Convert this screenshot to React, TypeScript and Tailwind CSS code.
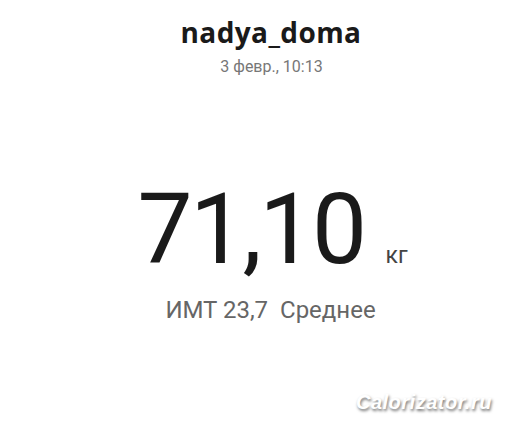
import React from "react";

export default function App() {
  return (
    <div className="relative w-[521px] h-[426px] bg-white overflow-hidden" style={{ fontFamily: "Roboto, 'Noto Sans', sans-serif" }}>
      <div className="flex flex-col items-center pt-[15px]">
        <div
          className="text-[28px] leading-[34px] font-bold tracking-[0.4px] pl-[21px] text-[#1a1a1a]"
          style={{ fontFamily: "'Open Sans', Roboto, sans-serif" }}
        >
          nadya_doma
        </div>
        <div className="text-[16px] leading-[20px] mt-[8px] pl-[22px] text-[#777]">3 февр., 10:13</div>
      </div>
      <div className="flex flex-col items-center mt-[104px]">
        <div className="flex items-baseline pl-[24px]">
          <span className="text-[98px] leading-[98px] tracking-[-2.5px] text-[#1a1a1a]">71,10</span>
          <span className="text-[23px] ml-[21px] text-[#444]">кг</span>
        </div>
        <div className="text-[24px] leading-[28px] mt-[17px] pl-[20px] text-[#666] whitespace-pre">ИМТ 23,7  Среднее</div>
      </div>
      <div
        className="absolute left-[356px] top-[390px] text-[20px] leading-[24px] font-bold italic text-white tracking-[0.5px]"
        style={{ fontFamily: "'Liberation Sans', Arial, sans-serif", textShadow: "1px 2px 3px rgba(0,0,0,0.55)" }}
      >
        Calorizator.ru
      </div>
    </div>
  );
}
